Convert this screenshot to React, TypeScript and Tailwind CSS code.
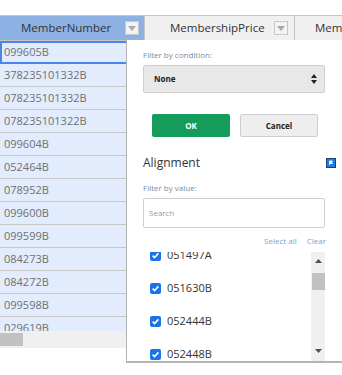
import React from "react";

const ROWS = [
  "099605B",
  "378235101332B",
  "078235101332B",
  "078235101322B",
  "099604B",
  "052464B",
  "078952B",
  "099600B",
  "099599B",
  "084273B",
  "084272B",
  "099598B",
  "029619B",
];

const VALUES = ["051497A", "051630B", "052444B", "052448B"];

const FilterButton = () => (
  <div className="flex h-[14px] w-[14px] items-center justify-center border border-[#c8c8c8] bg-[#f3f3f3]">
    <svg width="8" height="5" viewBox="0 0 8 5">
      <path d="M0 0h8L4 5z" fill="#a9a9a9" />
    </svg>
  </div>
);

const Check = () => (
  <div className="flex h-[11px] w-[11px] items-center justify-center rounded-[2px] bg-[#1a73e8]">
    <svg width="9" height="9" viewBox="0 0 9 9">
      <path d="M1.6 4.6l2 2 3.8-4.2" fill="none" stroke="#fff" strokeWidth="1.6" />
    </svg>
  </div>
);

export default function App() {
  return (
    <div
      className="relative h-[375px] w-[342px] overflow-hidden bg-white"
      style={{ fontFamily: '"Open Sans", "Noto Sans", sans-serif' }}
    >
      <div className="h-[15px]" />

      {/* header */}
      <div className="flex h-[26px] border-y border-[#c6c6c6] bg-[#f0f0f0] text-[11.5px] text-[#333]">
        <div className="flex w-[145px] shrink-0 items-center border-r border-[#c6c6c6] bg-[#8eb1e4] pl-[21px] pr-[5px]">
          <span className="flex-1">MemberNumber</span>
          <FilterButton />
        </div>
        <div className="flex w-[150px] shrink-0 items-center border-r border-[#c6c6c6] pl-[25px] pr-[6px]">
          <span className="flex-1">MembershipPrice</span>
          <FilterButton />
        </div>
        <div className="flex flex-1 items-center whitespace-nowrap pl-[20px]">
          <span>MembershipType</span>
        </div>
      </div>

      {/* body */}
      <div className="h-[290px] overflow-hidden">
        {ROWS.map((r, i) => (
          <div key={i} className="flex h-[23px]">
            <div
              className={
                i === 0
                  ? "flex w-[145px] shrink-0 items-center border-2 border-[#4a86e8] bg-[#e2ecfd] pl-[2px] text-[11px] text-[#707070]"
                  : "flex w-[145px] shrink-0 items-center border-b border-r border-[#c6c6c6] bg-[#e2ecfd] pl-[4px] text-[11px] text-[#707070]"
              }
            >
              {r}
            </div>
          </div>
        ))}
      </div>

      {/* horizontal scrollbar */}
      <div className="flex h-[17px] w-[145px] items-center bg-[#f0f0f0]">
        <div className="h-[13px] w-[23px] bg-[#c1c1c1]" />
      </div>

      {/* filter dropdown menu */}
      <div className="absolute left-[126px] top-[40px] flex h-[323px] w-[220px] flex-col border-b-2 border-l border-[#b5b5b5] bg-white pl-[16px] text-[#333]">
        <div className="mt-[10px] text-[8px] leading-[10px] text-[#808b99]">Filter by condition:</div>
        <div className="mt-[5px] flex h-[28px] w-[182px] items-center justify-between rounded-[2px] border border-[#cfcfcf] bg-[#e8e8e8] pl-[10px] pr-[7px]">
          <span className="text-[8px] font-bold text-[#222]">None</span>
          <svg width="6" height="10" viewBox="0 0 6 10">
            <path d="M0 4h6L3 0z M0 6h6L3 10z" fill="#222" />
          </svg>
        </div>

        <div className="mt-[21px] flex gap-[10px] pl-[9px]">
          <div className="flex h-[23px] w-[78px] items-center justify-center rounded-[2px] bg-[#169c5a] text-[8px] font-bold text-white">
            OK
          </div>
          <div className="flex h-[23px] w-[78px] items-center justify-center rounded-[2px] border border-[#cdcdcd] bg-[#eeeeee] text-[8px] font-bold text-[#222]">
            Cancel
          </div>
        </div>

        <div className="mt-[16px] flex h-[20px] w-[193px] items-center justify-between">
          <span className="text-[12px] text-[#333]">Alignment</span>
          <svg width="10" height="10" viewBox="0 0 10 10">
            <rect x="0" y="0" width="10" height="10" fill="#1b3f73" />
            <rect x="1" y="1" width="8" height="8" fill="#1e7ee0" />
            <path d="M3.5 3v4M3.5 3h3l-1 1.2 1 1.3h-3" fill="#fff" stroke="#fff" strokeWidth="0.8" />
          </svg>
        </div>

        <div className="mt-[10px] text-[8px] leading-[10px] text-[#808b99]">Filter by value:</div>
        <div className="mt-[5px] flex h-[30px] w-[182px] items-center rounded-[2px] border border-[#cfcfcf] pl-[5px] text-[8px] text-[#9a9a9a]">
          Search
        </div>

        <div className="mt-[8px] flex w-[183px] justify-end gap-[10px] text-[8px] leading-[10px] text-[#7f9ad6]">
          <span>Select all</span>
          <span>Clear</span>
        </div>

        <div className="mt-[6px] flex h-[109px] w-[182px]">
          <div className="flex-1 overflow-hidden">
            <div className="-mt-[13px]">
              {VALUES.map((v) => (
                <div key={v} className="flex h-[33px] items-center gap-[6px] pl-[7px] text-[11px] text-[#333]">
                  <Check />
                  <span>{v}</span>
                </div>
              ))}
            </div>
          </div>
          <div className="flex w-[14px] flex-col items-center bg-[#f0f0f0]">
            <svg className="mt-[7px]" width="7" height="4" viewBox="0 0 7 4">
              <path d="M0 4h7L3.5 0z" fill="#505050" />
            </svg>
            <div className="mt-[10px] h-[17px] w-[13px] bg-[#c1c1c1]" />
            <div className="flex-1" />
            <svg className="mb-[8px]" width="7" height="4" viewBox="0 0 7 4">
              <path d="M0 0h7L3.5 4z" fill="#505050" />
            </svg>
          </div>
        </div>
      </div>
    </div>
  );
}
